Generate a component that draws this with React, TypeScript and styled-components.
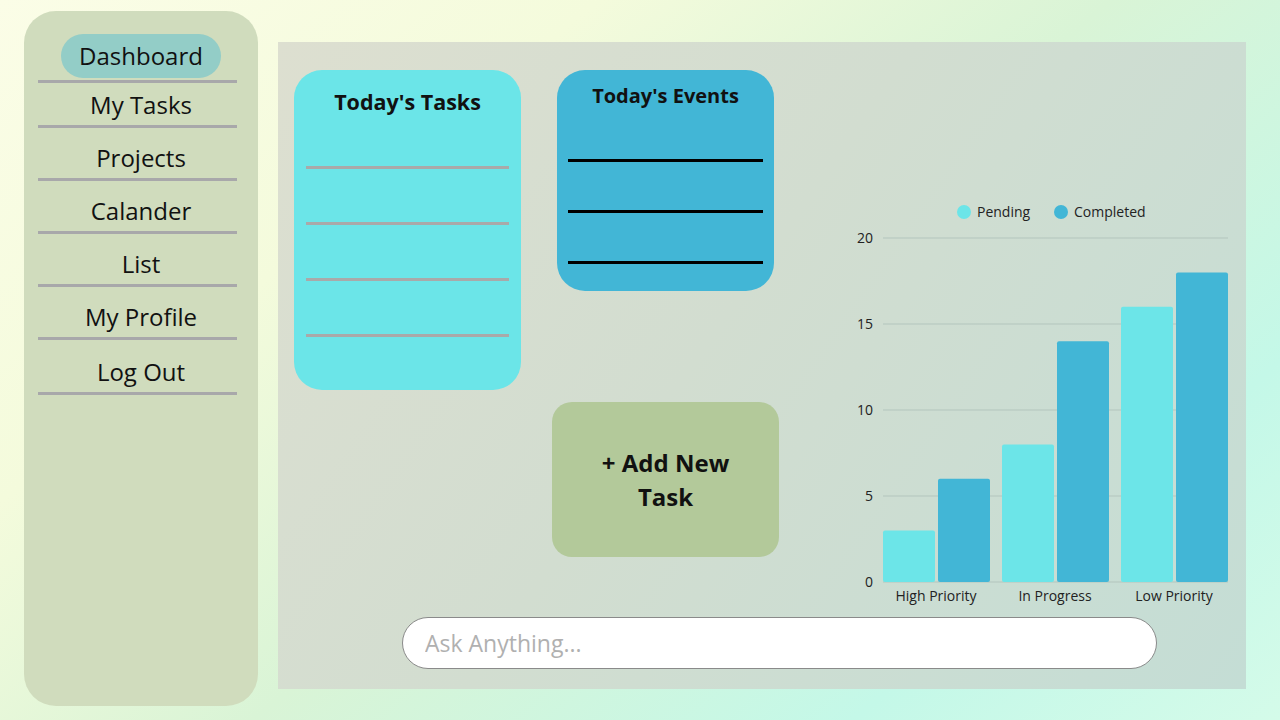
import React from 'react'
import styled, { createGlobalStyle } from 'styled-components';

const GlobalStyle = createGlobalStyle`
    * { box-sizing: border-box; }
    body {
        margin: 0;
        font-family: "Open Sans", "Noto Sans", sans-serif;
        color: #111;
    }
`;

const Page = styled.div`
    width: 1280px;
    height: 720px;
    display: flex;
    padding: 11px 0 0 24px;
    background: linear-gradient(140deg, #fbfde7 0%, #f4fbdc 28%, #d9f4d6 52%, #c4f8e8 80%, #d4fbe9 100%);
    overflow: hidden;
`;

const Sidebar = styled.nav`
    width: 234px;
    height: 695px;
    border-radius: 32px;
    background: #d0dcbd;
    padding-top: 23px;
    display: flex;
    flex-direction: column;
`;

const NavItem = styled.div<{ $pt: number }>`
    display: flex;
    flex-direction: column;
    align-items: center;
    padding-top: ${p => p.$pt}px;

    &::after {
        content: '';
        align-self: flex-start;
        margin-left: 14px;
        width: 199px;
        height: 3px;
        background: #a8a8aa;
    }
`;

const NavLabel = styled.span<{ $active?: boolean }>`
    height: ${p => (p.$active ? '44px' : '40px')};
    line-height: ${p => (p.$active ? '44px' : '40px')};
    font-size: 24px;
    padding: 0 18px;
    border-radius: 22px;
    background: ${p => (p.$active ? '#93cdc7' : 'transparent')};
    margin-bottom: ${p => (p.$active ? '2px' : '0')};
`;

const Main = styled.main`
    width: 968px;
    height: 647px;
    margin: 31px 0 0 20px;
    padding: 28px 0 0 16px;
    background: linear-gradient(125deg, #dddfd0 0%, #d2ddd0 45%, #c4ddd5 100%);
    display: flex;
    flex-direction: column;
`;

const TopRow = styled.div`
    display: flex;
    height: 540px;
`;

const Card = styled.section<{ $bg: string; $w: number; $h: number }>`
    width: ${p => p.$w}px;
    height: ${p => p.$h}px;
    background: ${p => p.$bg};
    border-radius: 28px;
    display: flex;
    flex-direction: column;
    align-items: center;
`;

const CardTitle = styled.h2<{ $top: number; $size: number }>`
    margin: ${p => p.$top}px 0 0;
    font-size: ${p => p.$size}px;
    font-weight: 700;
    line-height: 28px;
`;

const Rule = styled.div<{ $color: string; $w: number; $gap: number }>`
    width: ${p => p.$w}px;
    height: 3px;
    background: ${p => p.$color};
    margin-top: ${p => p.$gap}px;
`;

const MidColumn = styled.div`
    width: 227px;
    margin-left: 31px;
    display: flex;
    flex-direction: column;
    align-items: center;
`;

const AddButton = styled.button`
    width: 227px;
    height: 155px;
    margin-top: 111px;
    border: none;
    border-radius: 20px;
    background: #b3c99a;
    font-family: "Open Sans", "Noto Sans", sans-serif;
    font-size: 24px;
    font-weight: 700;
    line-height: 34px;
    color: #111;
    padding: 0 40px;
    cursor: pointer;
`;

const ChartBox = styled.div`
    margin: 120px 0 0 61px;
    width: 400px;
    height: 420px;
`;

const AskBar = styled.input`
    margin: 7px 0 0 108px;
    width: 755px;
    height: 52px;
    border-radius: 26px;
    border: 1px solid #8a8a8a;
    background: #fff;
    padding: 0 22px;
    font-family: "Open Sans", "Noto Sans", sans-serif;
    font-size: 23px;
    outline: none;

    &::placeholder { color: #b0b0b0; }
`;

const navItems = [
    { label: 'My Tasks', pt: 2 },
    { label: 'Projects', pt: 10 },
    { label: 'Calander', pt: 10 },
    { label: 'List', pt: 10 },
    { label: 'My Profile', pt: 10 },
    { label: 'Log Out', pt: 12 },
];

const data = [
    { label: 'High Priority', pending: 3, completed: 6 },
    { label: 'In Progress', pending: 8, completed: 14 },
    { label: 'Low Priority', pending: 16, completed: 18 },
];

const PENDING = '#6ce5e8';
const COMPLETED = '#42b6d6';

const Chart = () => {
    const base = 392;
    const unit = 17.2;
    return (
        <svg width="400" height="420" viewBox="0 0 400 420" fontFamily="Open Sans, Noto Sans, sans-serif">
            <circle cx="124" cy="22" r="7" fill={PENDING} />
            <text x="137" y="27" fontSize="14" fill="#222">Pending</text>
            <circle cx="221" cy="22" r="7" fill={COMPLETED} />
            <text x="234" y="27" fontSize="14" fill="#222">Completed</text>
            {[0, 5, 10, 15, 20].map(v => (
                <g key={v}>
                    <line x1="43" x2="388" y1={base - v * unit} y2={base - v * unit} stroke="#b3c5bd" strokeWidth="1" />
                    <text x="33" y={base - v * unit + 5} fontSize="14" textAnchor="end" fill="#222">{v}</text>
                </g>
            ))}
            {data.map((d, i) => {
                const x = 43 + i * 119;
                return (
                    <g key={d.label}>
                        <rect x={x} y={base - d.pending * unit} width="52" height={d.pending * unit} rx="2" fill={PENDING} />
                        <rect x={x + 55} y={base - d.completed * unit} width="52" height={d.completed * unit} rx="2" fill={COMPLETED} />
                        <text x={x + 53} y="411" fontSize="14" textAnchor="middle" fill="#222">{d.label}</text>
                    </g>
                );
            })}
        </svg>
    );
};

const App = () => {
  return (
    <Page>
        <GlobalStyle />
        <Sidebar>
            <NavItem $pt={0}>
                <NavLabel $active>Dashboard</NavLabel>
            </NavItem>
            {navItems.map(item => (
                <NavItem key={item.label} $pt={item.pt}>
                    <NavLabel>{item.label}</NavLabel>
                </NavItem>
            ))}
        </Sidebar>
        <Main>
            <TopRow>
                <Card $bg="#6be5e8" $w={227} $h={320}>
                    <CardTitle $top={18} $size={21.5}>Today's Tasks</CardTitle>
                    <Rule $color="#a9a9a9" $w={203} $gap={50} />
                    <Rule $color="#a9a9a9" $w={203} $gap={53} />
                    <Rule $color="#a9a9a9" $w={203} $gap={53} />
                    <Rule $color="#a9a9a9" $w={203} $gap={53} />
                </Card>
                <MidColumn>
                    <Card $bg="#42b6d6" $w={217} $h={221}>
                        <CardTitle $top={12} $size={20}>Today's Events</CardTitle>
                        <Rule $color="#000" $w={195} $gap={49} />
                        <Rule $color="#000" $w={195} $gap={48} />
                        <Rule $color="#000" $w={195} $gap={48} />
                    </Card>
                    <AddButton>+ Add New Task</AddButton>
                </MidColumn>
                <ChartBox>
                    <Chart />
                </ChartBox>
            </TopRow>
            <AskBar placeholder="Ask Anything..." />
        </Main>
    </Page>
  )
}

export default App
